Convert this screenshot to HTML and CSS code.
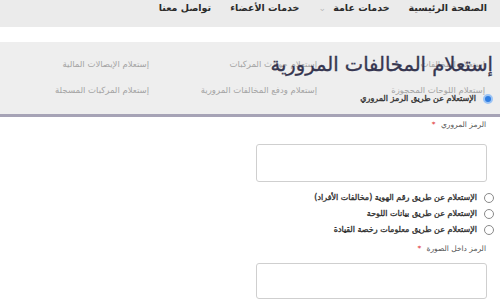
FILE: index.html
```html
<!DOCTYPE html>
<html lang="ar" dir="rtl">
<head>
<meta charset="utf-8">
<link rel="stylesheet" href="styles.css">
</head>
<body>
<nav class="topnav">
  <a class="nav-item">الصفحة الرئيسية</a>
  <a class="nav-item">خدمات عامة <span class="chev">&#8964;</span></a>
  <a class="nav-item">خدمات الأعضاء</a>
  <a class="nav-item">تواصل معنا</a>
</nav>
<section class="hero">
  <div class="stack">
    <div class="links">
      <span>إستعلام المخالفات</span>
      <span>إستعلام حوادث المركبات</span>
      <span>إستعلام الإيصالات المالية</span>
      <span>إستعلام اللوحات المحجوزة</span>
      <span>إستعلام ودفع المخالفات المرورية</span>
      <span>إستعلام المركبات المسجلة</span>
    </div>
    <h1 class="title">إستعلام المخالفات المرورية</h1>
  </div>
  <label class="hero-radio"><span class="radio checked"></span>الإستعلام عن طريق الرمز المروري</label>
</section>
<main class="form">
  <div class="field-label">الرمز المروري <span class="req">*</span></div>
  <div class="input"></div>
  <div class="options">
    <label class="opt"><span class="radio"></span>الإستعلام عن طريق رقم الهوية (مخالفات الأفراد)</label>
    <label class="opt"><span class="radio"></span>الإستعلام عن طريق بيانات اللوحة</label>
    <label class="opt"><span class="radio"></span>الإستعلام عن طريق معلومات رخصة القيادة</label>
  </div>
  <div class="field-label second">الرمز داخل الصورة <span class="req">*</span></div>
  <div class="input second"></div>
</main>
</body>
</html>
```
FILE: styles.css
```css
html, body {
  margin: 0;
  padding: 0;
  background: #ffffff;
  font-family: "DejaVu Sans", sans-serif;
  overflow: hidden;
}
body {
  width: 500px;
  height: 300px;
}
.topnav {
  display: flex;
  gap: 19px;
  height: 27px;
  background: #ebebeb;
  padding: 0 13px 0 0;
  box-sizing: border-box;
  align-items: flex-start;
}
.nav-item {
  font-size: 9.5px;
  font-weight: bold;
  color: #2b2b2b;
  line-height: 14px;
  padding-top: 1px;
  white-space: nowrap;
}
.chev {
  font-size: 9px;
  color: #bbb;
  font-weight: normal;
  margin-right: 4px;
}
.hero {
  margin-top: 15px;
  background: #eeeeee;
  border-bottom: 3px solid #a6a3b6;
  padding: 0 7px 10px 0;
  height: 62px;
  box-sizing: content-box;
}
.stack {
  display: grid;
}
.stack > * {
  grid-area: 1 / 1;
}
.links {
  display: grid;
  grid-template-columns: repeat(3, 168px);
  grid-auto-rows: 14px;
  row-gap: 11.5px;
  padding: 15px 8px 0 0;
  font-size: 8.5px;
  color: #a4a4a4;
  line-height: 14px;
}
.links span {
  white-space: nowrap;
}
.title {
  margin: 0;
  padding-top: 8px;
  font-size: 19.5px;
  font-weight: normal;
  color: #363650;
  line-height: 30px;
  -webkit-text-stroke: 0.35px #363650;
}
.hero-radio {
  display: flex;
  align-items: center;
  gap: 7px;
  margin-top: -5px;
  font-size: 8px;
  color: #333;
  line-height: 14px;
  -webkit-text-stroke: 0.35px #333;
}
.radio {
  width: 10px;
  height: 10px;
  border: 1px solid #8a8a8a;
  border-radius: 50%;
  box-sizing: border-box;
  background: #fff;
  flex: none;
}
.radio.checked {
  border: 2px solid #9cc4f5;
  background: #2f7de1;
}
.form {
  padding: 0 13px 0 0;
}
.field-label {
  margin-top: 0;
  font-size: 7.5px;
  color: #555;
  line-height: 16px;
  padding-right: 1px;
}
.field-label.second {
  margin-top: 3px;
}
.req {
  color: #e03030;
  margin-right: 3px;
}
.input {
  width: 231px;
  height: 38px;
  margin-top: 11px;
  border: 1px solid #cfcfcf;
  border-radius: 3px;
  box-sizing: border-box;
}
.input.second {
  margin-top: 6px;
  height: 36px;
}
.options {
  margin-top: 8px;
  display: flex;
  flex-direction: column;
}
.opt {
  display: flex;
  align-items: center;
  gap: 7px;
  margin-right: -7px;
  font-size: 8px;
  color: #333;
  line-height: 16px;
  -webkit-text-stroke: 0.35px #333;
}
```
